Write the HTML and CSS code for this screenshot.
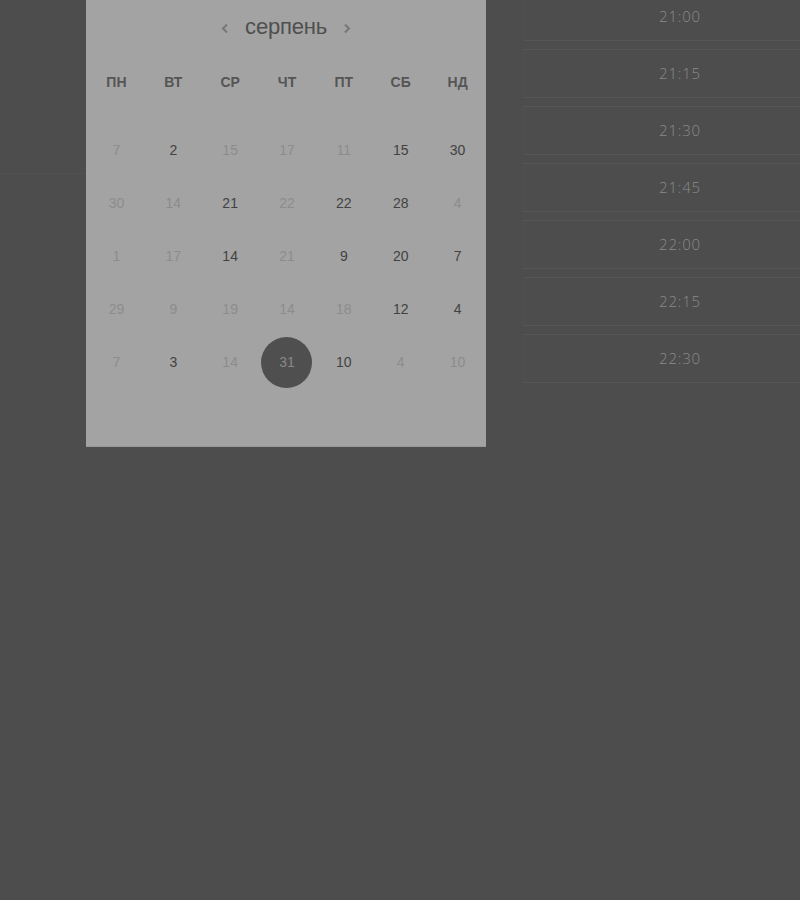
FILE: index.html
```html
<!DOCTYPE html>
<html lang="uk">
<head>
<meta charset="utf-8">
<title>Календар</title>
<link rel="stylesheet" href="styles.css">
</head>
<body>
<div class="page">
  <div class="side"><div class="side-line"></div></div>
  <section class="calendar">
    <header class="month">
      <svg class="chev" width="8" height="11" viewBox="0 0 8 11"><polyline points="6,1.5 2,5.5 6,9.5" fill="none" stroke="#777" stroke-width="2"/></svg>
      <span class="month-name">серпень</span>
      <svg class="chev" width="8" height="11" viewBox="0 0 8 11"><polyline points="2,1.5 6,5.5 2,9.5" fill="none" stroke="#777" stroke-width="2"/></svg>
    </header>
    <div class="weekdays">
      <span>ПН</span><span>ВТ</span><span>СР</span><span>ЧТ</span><span>ПТ</span><span>СБ</span><span>НД</span>
    </div>
    <div class="days">
      <span class="day off">7</span><span class="day">2</span><span class="day off">15</span><span class="day off">17</span><span class="day off">11</span><span class="day">15</span><span class="day">30</span>
      <span class="day off">30</span><span class="day off">14</span><span class="day">21</span><span class="day off">22</span><span class="day">22</span><span class="day">28</span><span class="day off">4</span>
      <span class="day off">1</span><span class="day off">17</span><span class="day">14</span><span class="day off">21</span><span class="day">9</span><span class="day">20</span><span class="day">7</span>
      <span class="day off">29</span><span class="day off">9</span><span class="day off">19</span><span class="day off">14</span><span class="day off">18</span><span class="day">12</span><span class="day">4</span>
      <span class="day off">7</span><span class="day">3</span><span class="day off">14</span><span class="day selected"><span class="dot">31</span></span><span class="day">10</span><span class="day off">4</span><span class="day off">10</span>
    </div>
  </section>
  <ul class="times">
    <li class="slot">21:00</li>
    <li class="slot">21:15</li>
    <li class="slot">21:30</li>
    <li class="slot">21:45</li>
    <li class="slot">22:00</li>
    <li class="slot">22:15</li>
    <li class="slot">22:30</li>
  </ul>
</div>
</body>
</html>
```
FILE: styles.css
```css
html, body {
  margin: 0;
  padding: 0;
  background: #4d4d4d;
  width: 800px;
  height: 900px;
  overflow: hidden;
  font-family: "Liberation Sans", Arial, sans-serif;
}

.page {
  display: flex;
  align-items: flex-start;
}

.side {
  width: 86px;
  flex: none;
  padding-top: 173px;
}

.side-line {
  height: 1px;
  background: #515151;
}

.calendar {
  width: 400px;
  height: 446px;
  flex: none;
  background: #a3a3a3;
  border-bottom: 1px solid #989898;
  display: flex;
  flex-direction: column;
}

.month {
  height: 56px;
  display: flex;
  align-items: center;
  justify-content: center;
  gap: 16px;
}

.month-name {
  font-size: 22px;
  color: #4f4f4f;
  letter-spacing: -0.2px;
  line-height: 1;
  padding-bottom: 2px;
}

.chev {
  display: block;
  margin-top: 1px;
}

.weekdays {
  height: 52px;
  display: grid;
  grid-template-columns: repeat(7, 1fr);
  align-items: center;
  justify-items: center;
  font-size: 14px;
  font-weight: bold;
  color: #555;
  margin-bottom: 16px;
  padding-left: 2px;
}

.days {
  display: grid;
  grid-template-columns: repeat(7, 1fr);
  grid-auto-rows: 53px;
  align-items: center;
  justify-items: center;
  padding-left: 2px;
}

.day {
  font-size: 14px;
  color: #424242;
  padding-bottom: 2px;
}

.day.off {
  color: #8c8c8c;
}

.day.selected {
  padding-bottom: 0;
}

.dot {
  width: 51px;
  height: 51px;
  border-radius: 50%;
  background: #4f4f4f;
  color: #888;
  display: flex;
  align-items: center;
  justify-content: center;
  font-size: 14px;
  padding-bottom: 2px;
  box-sizing: border-box;
}

.times {
  list-style: none;
  margin: -8px 0 0 37px;
  padding: 0;
  flex: 1;
  display: flex;
  flex-direction: column;
  gap: 8px;
}

.slot {
  height: 45px;
  border-top: 1px solid #555;
  border-bottom: 1px solid #555;
  border-left: 1px solid #505050;
  display: flex;
  align-items: center;
  justify-content: center;
  font-family: "Open Sans", sans-serif;
  font-weight: 300;
  font-size: 15px;
  letter-spacing: 0.8px;
  color: #8a8a8a;
  padding-left: 36px;
  padding-bottom: 2px;
  box-sizing: content-box;
}
```
